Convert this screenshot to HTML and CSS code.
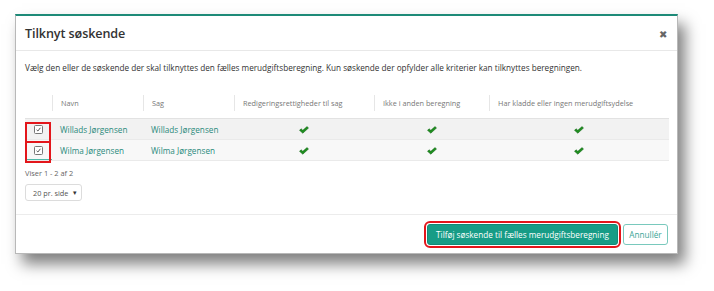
FILE: index.html
```html
<!DOCTYPE html>
<html lang="da">
<head>
<meta charset="utf-8">
<title>Tilknyt søskende</title>
<link rel="stylesheet" href="styles.css">
</head>
<body>
<div class="dialog">
  <div class="dlg-header">
    <h1 class="title">Tilknyt søskende</h1>
    <span class="close">&#x2716;</span>
  </div>
  <div class="dlg-body">
    <p class="desc">Vælg den eller de søskende der skal tilknyttes den fælles merudgiftsberegning. Kun søskende der opfylder alle kriterier kan tilknyttes beregningen.</p>
    <div class="table-wrap">
      <table class="grid">
        <colgroup>
          <col class="c-chk"><col class="c-navn"><col class="c-sag"><col class="c-red"><col class="c-ikke"><col class="c-har">
        </colgroup>
        <thead>
          <tr>
            <th></th>
            <th><div class="th-in">Navn</div></th>
            <th><div class="th-in">Sag</div></th>
            <th><div class="th-in">Redigeringsrettigheder til sag</div></th>
            <th><div class="th-in">Ikke i anden beregning</div></th>
            <th><div class="th-in">Har kladde eller ingen merudgiftsydelse</div></th>
          </tr>
        </thead>
        <tbody>
          <tr class="r1">
            <td class="chk"><svg class="cb" viewBox="0 0 9 9" width="9" height="9"><rect x="0.5" y="0.5" width="8" height="8" rx="1" fill="#fff" stroke="#777"/><path d="M2.6 4.8 L3.9 6 L6.4 2.8" fill="none" stroke="#555" stroke-width="1"/></svg></td>
            <td><a class="lnk">Willads Jørgensen</a></td>
            <td><a class="lnk">Willads Jørgensen</a></td>
            <td class="ok"><svg class="tick" viewBox="0 0 10 8" width="10" height="8"><path d="M0.5 4.3 L2.2 2.8 L3.8 4.3 L8 0.6 L9.5 2 L3.8 7.2 Z" fill="#1f8f1f" stroke="#0d5e12" stroke-width="0.5"/></svg></td>
            <td class="ok"><svg class="tick" viewBox="0 0 10 8" width="10" height="8"><path d="M0.5 4.3 L2.2 2.8 L3.8 4.3 L8 0.6 L9.5 2 L3.8 7.2 Z" fill="#1f8f1f" stroke="#0d5e12" stroke-width="0.5"/></svg></td>
            <td class="ok"><svg class="tick" viewBox="0 0 10 8" width="10" height="8"><path d="M0.5 4.3 L2.2 2.8 L3.8 4.3 L8 0.6 L9.5 2 L3.8 7.2 Z" fill="#1f8f1f" stroke="#0d5e12" stroke-width="0.5"/></svg></td>
          </tr>
          <tr class="r2">
            <td class="chk focus"><svg class="cb" viewBox="0 0 9 9" width="9" height="9"><rect x="0.5" y="0.5" width="8" height="8" rx="1" fill="#fff" stroke="#777"/><path d="M2.6 4.8 L3.9 6 L6.4 2.8" fill="none" stroke="#555" stroke-width="1"/></svg></td>
            <td><a class="lnk">Wilma Jørgensen</a></td>
            <td><a class="lnk">Wilma Jørgensen</a></td>
            <td class="ok"><svg class="tick" viewBox="0 0 10 8" width="10" height="8"><path d="M0.5 4.3 L2.2 2.8 L3.8 4.3 L8 0.6 L9.5 2 L3.8 7.2 Z" fill="#1f8f1f" stroke="#0d5e12" stroke-width="0.5"/></svg></td>
            <td class="ok"><svg class="tick" viewBox="0 0 10 8" width="10" height="8"><path d="M0.5 4.3 L2.2 2.8 L3.8 4.3 L8 0.6 L9.5 2 L3.8 7.2 Z" fill="#1f8f1f" stroke="#0d5e12" stroke-width="0.5"/></svg></td>
            <td class="ok"><svg class="tick" viewBox="0 0 10 8" width="10" height="8"><path d="M0.5 4.3 L2.2 2.8 L3.8 4.3 L8 0.6 L9.5 2 L3.8 7.2 Z" fill="#1f8f1f" stroke="#0d5e12" stroke-width="0.5"/></svg></td>
          </tr>
        </tbody>
      </table>
      <div class="mark mark-a"></div>
      <div class="mark mark-b"></div>
    </div>
    <div class="pager-info">Viser 1 - 2 af 2</div>
    <div class="select"><span>20 pr. side</span><span class="caret">&#9662;</span></div>
  </div>
  <div class="dlg-footer">
    <button class="btn btn-primary">Tilføj søskende til fælles merudgiftsberegning</button>
    <button class="btn btn-default">Annullér</button>
  </div>
</div>
</body>
</html>
```
FILE: styles.css
```css
html, body {
  margin: 0;
  padding: 0;
  background: #fff;
}
body {
  width: 714px;
  height: 291px;
  overflow: hidden;
  padding: 14px 0 0 15px;
  box-sizing: border-box;
  font-family: "Open Sans", "Noto Sans", sans-serif;
  color: #333;
}
.dialog {
  width: 663px;
  height: 240px;
  box-sizing: border-box;
  background: #fff;
  border: 1px solid #b8b8b8;
  border-top: 2px solid #1d8a78;
  box-shadow: 7px 10px 14px rgba(0, 0, 0, 0.5);
  display: flex;
  flex-direction: column;
}
.dlg-header {
  height: 35px;
  border-bottom: 1px solid #e8e8e8;
  display: flex;
  align-items: center;
  justify-content: space-between;
  padding: 0 10px 0 9px;
  box-sizing: border-box;
  flex: none;
}
.title {
  margin: 0;
  font-size: 12.6px;
  font-weight: 600;
  color: #333;
  letter-spacing: -0.1px;
}
.close {
  font-size: 10px;
  color: #666;
  margin-top: 1px;
}
.dlg-body {
  padding: 11px 9px 0 9px;
  flex: 1;
  border-bottom: 1px solid #ececec;
}
.desc {
  margin: 0;
  font-size: 8.2px;
  line-height: 12px;
  color: #333;
}
.table-wrap {
  position: relative;
  margin-top: 13px;
}
.grid {
  width: 644px;
  border-collapse: collapse;
  table-layout: fixed;
  font-size: 8.2px;
}
.c-chk { width: 27px; }
.c-navn { width: 91px; }
.c-sag { width: 91px; }
.c-red { width: 140px; }
.c-ikke { width: 115px; }
.c-har { width: 180px; }
.grid th {
  height: 31px;
  padding: 0;
  text-align: left;
  font-weight: normal;
  color: #777;
  font-size: 7.3px;
  border-bottom: 1px solid #e2e2e2;
}
.th-in {
  border-left: 1px solid #e6e6e6;
  padding: 3px 8px;
  line-height: 10px;
}
.grid td {
  height: 20px;
  padding: 0 0 0 8px;
  vertical-align: middle;
}
.r1 td { background: #f2f2f2; border-bottom: 1px solid #eaeaea; }
.r2 td { background: #f8f8f8; border-bottom: 1px solid #eaeaea; }
.grid td.chk {
  padding: 0;
  text-align: center;
}
.grid td.focus {
  box-shadow: inset 1px 0 0 #4fb8a8, inset 0 -1px 0 #4fb8a8;
}
.cb { display: block; margin: 0 auto; }
.grid td.ok {
  padding: 0;
  text-align: center;
}
.tick { display: inline-block; vertical-align: middle; }
.lnk {
  color: #2a8a7c;
  font-size: 8.2px;
}
.mark {
  position: absolute;
  left: 0;
  width: 26px;
  box-sizing: border-box;
  border: 2px solid #e3161b;
}
.mark-a { top: 35px; height: 21px; }
.mark-b { top: 54px; height: 22px; }
.pager-info {
  margin-top: 6px;
  font-size: 7.4px;
  color: #666;
  line-height: 12px;
}
.select {
  margin-top: 5px;
  width: 57px;
  height: 17px;
  box-sizing: border-box;
  border: 1px solid #dcdcdc;
  border-radius: 3px;
  display: flex;
  align-items: center;
  justify-content: space-between;
  padding: 0 4px 0 7px;
  font-size: 7.3px;
  color: #555;
}
.caret { font-size: 7px; color: #333; }
.dlg-footer {
  height: 38px;
  flex: none;
  display: flex;
  align-items: center;
  justify-content: flex-end;
  gap: 5px;
  padding: 0 9px 0 0;
  box-sizing: border-box;
}
.btn {
  height: 21px;
  border-radius: 3px;
  font-family: "Open Sans", "Noto Sans", sans-serif;
  font-size: 8.2px;
  padding: 0 4px;
  box-sizing: border-box;
  white-space: nowrap;
  cursor: pointer;
}
.btn-primary {
  width: 191px;
  background: #179c86;
  color: #fff;
  border: 1px solid #138a76;
  outline: 2px solid #e3161b;
  outline-offset: 1px;
}
.btn-default {
  width: 45px;
  background: #fff;
  color: #3aa595;
  border: 1px solid #79c9bd;
}
```
